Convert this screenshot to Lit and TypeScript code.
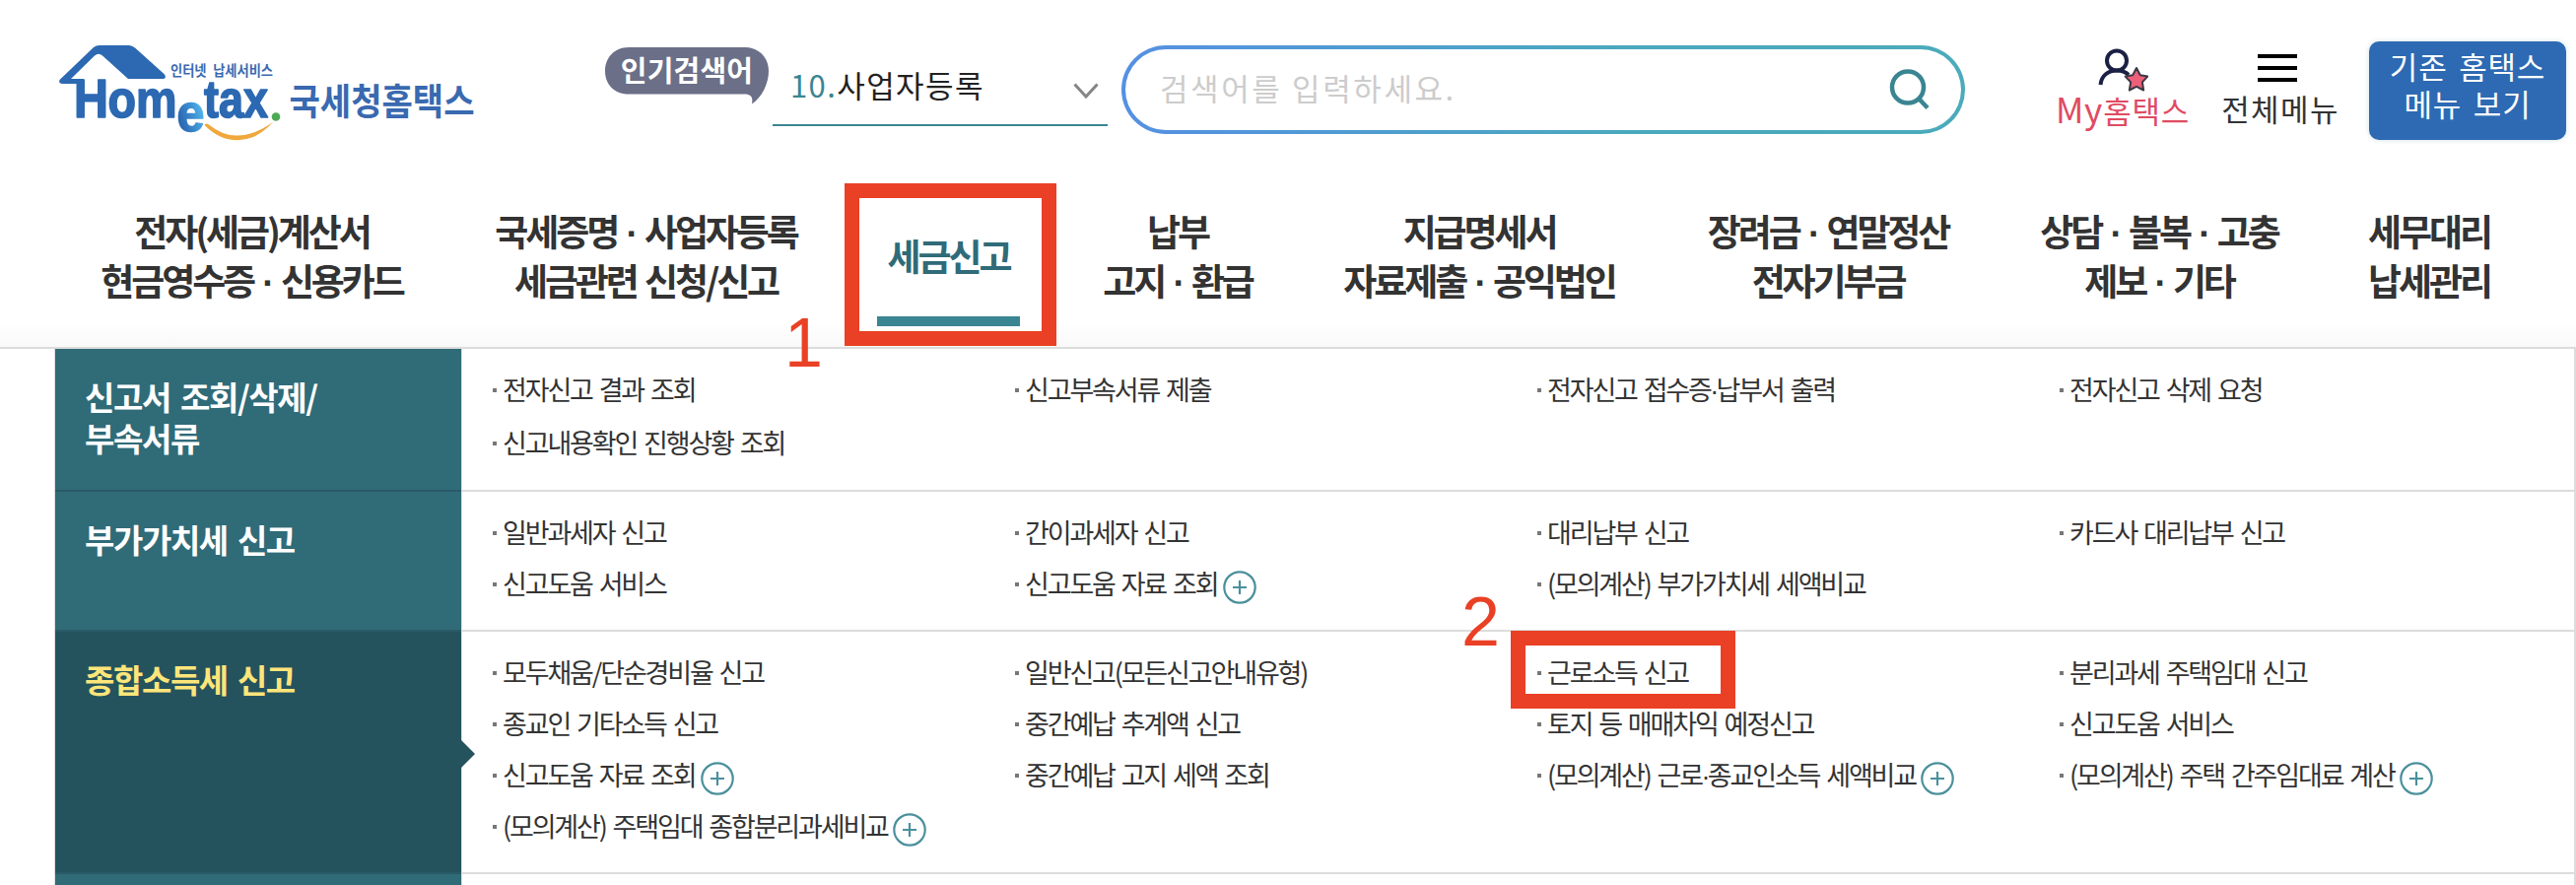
import { LitElement, html, css, svg, nothing } from "lit";
import { customElement, property } from "lit/decorators.js";
import { classMap } from "lit/directives/class-map.js";

interface MenuLink {
  label: string;
  plus?: boolean;
}
interface MenuRow {
  title: string[];
  size: string;
  active?: boolean;
  columns: MenuLink[][];
}

const NAV: string[][] = [
  ["전자(세금)계산서", "현금영수증 · 신용카드"],
  ["국세증명 · 사업자등록", "세금관련 신청/신고"],
  ["세금신고"],
  ["납부", "고지 · 환급"],
  ["지급명세서", "자료제출 · 공익법인"],
  ["장려금 · 연말정산", "전자기부금"],
  ["상담 · 불복 · 고충", "제보 · 기타"],
  ["세무대리", "납세관리"],
];

const ROWS: MenuRow[] = [
  {
    title: ["신고서 조회/삭제/", "부속서류"],
    size: "first",
    columns: [
      [{ label: "전자신고 결과 조회" }, { label: "신고내용확인 진행상황 조회" }],
      [{ label: "신고부속서류 제출" }],
      [{ label: "전자신고 접수증·납부서 출력" }],
      [{ label: "전자신고 삭제 요청" }],
    ],
  },
  {
    title: ["부가가치세 신고"],
    size: "second",
    columns: [
      [{ label: "일반과세자 신고" }, { label: "신고도움 서비스" }],
      [{ label: "간이과세자 신고" }, { label: "신고도움 자료 조회", plus: true }],
      [{ label: "대리납부 신고" }, { label: "(모의계산) 부가가치세 세액비교" }],
      [{ label: "카드사 대리납부 신고" }],
    ],
  },
  {
    title: ["종합소득세 신고"],
    size: "third",
    active: true,
    columns: [
      [
        { label: "모두채움/단순경비율 신고" },
        { label: "종교인 기타소득 신고" },
        { label: "신고도움 자료 조회", plus: true },
        { label: "(모의계산) 주택임대 종합분리과세비교", plus: true },
      ],
      [
        { label: "일반신고(모든신고안내유형)" },
        { label: "중간예납 추계액 신고" },
        { label: "중간예납 고지 세액 조회" },
      ],
      [
        { label: "근로소득 신고" },
        { label: "토지 등 매매차익 예정신고" },
        { label: "(모의계산) 근로·종교인소득 세액비교", plus: true },
      ],
      [
        { label: "분리과세 주택임대 신고" },
        { label: "신고도움 서비스" },
        { label: "(모의계산) 주택 간주임대료 계산", plus: true },
      ],
    ],
  },
  { title: [], size: "fourth", columns: [[], [], [], []] },
];

/* Sets every middle dot of a label in a narrower face. */
const withDots = (text: string) =>
  text.split("·").map((part, i) => (i ? html`<span class="middot">·</span>${part}` : part));

@customElement("site-logo")
export class SiteLogo extends LitElement {
  static styles = css`
    :host {
      display: block;
      width: 450px;
      height: 110px;
    }
    .mark {
      display: block;
    }
    .latin {
      font-family: "Liberation Sans", Arial, sans-serif;
      font-weight: 700;
    }
    .korean {
      font-family: "Noto Sans CJK KR", sans-serif;
      font-weight: 700;
    }
    .slogan {
      word-spacing: 4px;
    }
  `;
  render() {
    return html`<svg class="mark" width="450" height="110" viewBox="56 40 450 110">
      ${svg`
      <defs>
        <linearGradient id="e" x1="0.9" y1="0.3" x2="0.2" y2="0.75">
          <stop offset="0" stop-color="#55bdf0"></stop>
          <stop offset="0.45" stop-color="#3e93d4"></stop>
          <stop offset="1" stop-color="#2c69b2"></stop>
        </linearGradient>
      </defs>
      <path fill="#2c69b2" d="M60.500 81 L95 48 Q97.500 46 101 46 H131 Q134 46 137 48.500 L167 75.500 Q169.500 80 165 80 H130 L104 56.500 Q100 53 96 56.500 L72 80 H85 V85 H63 Q59 84.500 60.500 81Z"></path>
      <g class="latin" fill="#2c69b2" stroke="#2c69b2" stroke-width="1.600" stroke-linejoin="round">
        <text x="75" y="119" font-size="55" textLength="35" lengthAdjust="spacingAndGlyphs">H</text>
        <text x="109.500" y="119" font-size="53" textLength="70" lengthAdjust="spacingAndGlyphs">om</text>
        <text x="179.500" y="132.500" font-size="53" fill="url(#e)" stroke="url(#e)" textLength="28" lengthAdjust="spacingAndGlyphs">e</text>
        <text x="207" y="119" font-size="53" textLength="65" lengthAdjust="spacingAndGlyphs">tax</text>
      </g>
      <circle cx="280" cy="118.500" r="4.300" fill="#4cab55"></circle>
      <path fill="#f0a83c" d="M207.500 127 Q209 124.500 212 126.500 Q226 138 241 137.500 Q258 137.500 277.500 123.500 Q260 142.500 241 142.300 Q223 142.500 207.500 127Z"></path>
      <g class="korean" fill="#3a69b0">
        <text class="slogan" x="173" y="76.500" font-size="14.500" textLength="104" lengthAdjust="spacingAndGlyphs">인터넷 납세서비스</text>
        <text x="293.500" y="116.500" font-size="37" textLength="188" lengthAdjust="spacingAndGlyphs">국세청홈택스</text>
      </g>`}
    </svg>`;
  }
}

@customElement("menu-link")
export class MenuLinkItem extends LitElement {
  @property() label = "";
  @property({ type: Boolean }) plus = false;
  static styles = css`
    :host {
      display: flex;
      align-items: center;
      height: var(--line, 52px);
      white-space: nowrap;
      color: #333;
      font-size: 27px;
      letter-spacing: -2.15px;
      word-spacing: 3px;
    }
    .dot {
      width: 4px;
      height: 4px;
      margin-right: 6px;
      background: #777;
    }
    .label {
      padding-bottom: 4px;
    }
    .middot {
      font-family: "Liberation Sans", sans-serif;
      line-height: 0;
      margin: 0 -0.5px;
    }
    .plus {
      margin: 6px 0 0 5.5px;
      flex: none;
    }
  `;
  render() {
    return html`<span class="dot"></span><span class="label">${withDots(this.label)}</span>${this.plus
        ? html`<svg class="plus" width="34" height="34" viewBox="0 0 34 34" fill="none" stroke="#4a909c" stroke-width="2.200">
            <circle cx="17" cy="17" r="15.700"></circle>
            <path d="M10 17H24M17 10V24"></path>
          </svg>`
        : nothing}`;
  }
}

@customElement("app-root")
export class AppRoot extends LitElement {
  static styles = css`
    :host {
      display: block;
      position: relative;
      width: 2614px;
      height: 898px;
      overflow: hidden;
      background: #fff;
      font-family: "Noto Sans CJK KR", sans-serif;
      color: #333;
    }
    * {
      box-sizing: border-box;
    }
    .header {
      display: flex;
      align-items: flex-start;
      height: 186px;
      padding: 40px 0 0 56px;
      white-space: nowrap;
    }
    .badge {
      margin: 7px 0 0 108px;
      display: grid;
      width: 166px;
      height: 60px;
    }
    .badge > * {
      grid-area: 1 / 1;
    }
    .badge-text {
      height: 48px;
      line-height: 46px;
      text-align: center;
      color: #fff;
      font-weight: 700;
      font-size: 29px;
      letter-spacing: 0.2px;
    }
    .select {
      display: flex;
      justify-content: space-between;
      align-items: center;
      width: 340px;
      height: 78px;
      margin: 10px 0 0 4px;
      padding: 0 9px 5px 18px;
      border-bottom: 2px solid #3a8592;
      font-size: 31px;
      color: #222;
      letter-spacing: 1.4px;
    }
    .chevron {
      margin-top: 12px;
    }
    .rank {
      color: #3a8592;
    }
    .search {
      display: flex;
      justify-content: space-between;
      align-items: center;
      width: 856px;
      height: 90px;
      margin: 6px 0 0 14px;
      padding: 0 31px 0 35px;
      border: 4px solid transparent;
      border-radius: 45px;
      background: linear-gradient(#fff, #fff) padding-box,
        linear-gradient(90deg, #5590e3, #4aa9bd 60%, #4aabbb) border-box;
    }
    .placeholder {
      padding-bottom: 5px;
      color: #ccc;
      font-size: 31px;
      letter-spacing: 2.6px;
    }
    .shortcut {
      display: flex;
      flex-direction: column;
      align-items: center;
      font-size: 31px;
      line-height: 32px;
    }
    .mine {
      width: 140px;
      margin: 8px 0 0 90px;
      color: #df4b62;
      letter-spacing: 0.8px;
    }
    .my {
      font-size: 35px;
    }
    .all {
      width: 120px;
      margin: 8px 0 0 30px;
      letter-spacing: 1.4px;
    }
    .burger {
      margin-right: 7px;
    }
    .legacy {
      width: 200px;
      height: 100px;
      margin: 2px 0 0 30px;
      padding-top: 6px;
      border-radius: 10px;
      background: #2d6ab3;
      box-shadow: 0 0 5px rgba(60, 130, 150, 0.25);
      color: #fff;
      text-align: center;
      font-size: 31px;
      line-height: 37.5px;
      letter-spacing: 0.8px;
      word-spacing: 4px;
    }
    .nav {
      display: grid;
      grid-template-columns: 391px 409px 205px 260px 352px 356px 316px 232px;
      height: 168px;
      padding: 0 33px 0 60px;
      border-bottom: 2px solid #dcdcdc;
      background: linear-gradient(#fff 85%, #f9f9f9);
    }
    .nav-item {
      display: flex;
      flex-direction: column;
      justify-content: center;
      align-items: center;
      height: 145px;
      font-size: 37px;
      font-weight: 700;
      line-height: 50px;
      letter-spacing: -3.1px;
      word-spacing: 3px;
      white-space: nowrap;
    }
    .line {
      height: 50px;
    }
    .middot {
      font-family: "Liberation Sans", sans-serif;
      line-height: 0;
      margin: 0 1px;
    }
    .nav-item.current {
      color: #2f6b78;
      padding-top: 48px;
      justify-content: flex-start;
    }
    .nav-item.current::after {
      content: "";
      width: 145px;
      height: 10px;
      margin-top: 37px;
      flex: none;
      background: #3a8592;
    }
    .mega {
      margin-left: 55px;
      border-left: 1px solid #dcdcdc;
      border-right: 2px solid #dcdcdc;
    }
    .row {
      display: grid;
      grid-template-columns: 412px 1fr;
    }
    .first {
      height: 145px;
      --line: 54px;
      --top: 15px;
    }
    .second {
      height: 142px;
    }
    .third {
      height: 246px;
    }
    .fourth {
      height: 12px;
    }
    .title {
      display: flex;
      flex-direction: column;
      position: relative;
      padding: 27px 0 0 30px;
      background: #306b78;
      border-bottom: 2px solid #295a66;
      color: #fff;
      font-size: 33px;
      font-weight: 700;
      line-height: 42px;
      letter-spacing: -1.4px;
      word-spacing: 4px;
    }
    .title.active {
      background: #24535e;
      color: #fde57a;
    }
    .title.active::after {
      content: "";
      position: absolute;
      left: 412px;
      top: 110px;
      border: 14px solid transparent;
      border-left-color: #24535e;
      border-right-width: 0;
    }
    .cells {
      display: grid;
      grid-template-columns: repeat(4, 530px);
      padding: var(--top, 16px) 0 0 31px;
      border-left: 1px solid #dcdcdc;
      border-bottom: 2px solid #dcdcdc;
      overflow: hidden;
    }
    .mark {
      position: absolute;
      border: 15px solid #ea4025;
    }
    .mark-nav {
      left: 857px;
      top: 186px;
      width: 215px;
      height: 165px;
    }
    .mark-link {
      left: 1533px;
      top: 640px;
      width: 228px;
      height: 79px;
    }
    .step {
      position: absolute;
      color: #ea4025;
      font: 70px/70px "Liberation Sans", Arial, sans-serif;
    }
    .step-one {
      left: 796px;
      top: 313px;
    }
    .step-two {
      left: 1483px;
      top: 596px;
    }
  `;

  render() {
    return html`
      <header class="header">
        <site-logo></site-logo>
        <div class="badge">
          <svg width="166" height="60" viewBox="0 0 166 60">
            <path fill="#6b6f87" d="M24 1H142C157 1 166 12 166 25C166 38 159 52 149 58.500C150 52 149 48.500 141 48.500H24C9 48.500 0 38 0 25C0 12 9 1 24 1Z"></path>
          </svg>
          <span class="badge-text">인기검색어</span>
        </div>
        <div class="select">
          <span><span class="rank">10.</span>사업자등록</span>
          <svg class="chevron" width="26" height="18" viewBox="0 0 26 18" fill="none" stroke="#858585" stroke-width="3">
            <path d="M1.500 2.500L13 15L24.500 2.500"></path>
          </svg>
        </div>
        <div class="search">
          <span class="placeholder">검색어를 입력하세요.</span>
          <svg width="42" height="42" viewBox="0 0 42 42" fill="none" stroke="#3a8592" stroke-width="4.500">
            <circle cx="19" cy="18.500" r="16"></circle>
            <path d="M30 30L39 39.500"></path>
          </svg>
        </div>
        <div class="shortcut mine">
          <svg width="52" height="46" viewBox="0 0 52 46">
            <g fill="none" stroke="#1b2144" stroke-width="4">
              <circle cx="20" cy="13.500" r="10"></circle>
              <path d="M3.500 38C4.500 28 12 23.500 20 23.500C25 23.500 29 25 32 28"></path>
            </g>
            <path fill="#ec6079" stroke="#3c3844" stroke-width="2" stroke-linejoin="round" d="M40 21L43.800 28.300L51.300 29.600L45.900 35.400L47.200 43.500L40 39.800L32.800 43.500L34.100 35.400L28.700 29.600L36.200 28.300Z"></path>
          </svg>
          <span><span class="my">My</span>홈택스</span>
        </div>
        <div class="shortcut all">
          <svg class="burger" width="40" height="46" viewBox="0 0 40 46" stroke="#000" stroke-width="4">
            <path d="M0 9H40M0 21H40M0 33H40"></path>
          </svg>
          <span>전체메뉴</span>
        </div>
        <div class="legacy">기존 홈택스<br />메뉴 보기</div>
      </header>
      <nav class="nav">
        ${NAV.map(
          (lines, i) => html`<div class=${classMap({ "nav-item": true, current: i === 2 })}>
            ${lines.map((l) => html`<span class="line">${withDots(l)}</span>`)}
          </div>`
        )}
      </nav>
      <main class="mega">
        ${ROWS.map(
          (row) => html`<section class="row ${row.size}">
            <div class=${classMap({ title: true, active: !!row.active })}>
              ${row.title.map((t) => html`<span>${t}</span>`)}
            </div>
            <div class="cells">
              ${row.columns.map(
                (col) => html`<div>
                  ${col.map((l) => html`<menu-link .label=${l.label} .plus=${!!l.plus}></menu-link>`)}
                </div>`
              )}
            </div>
          </section>`
        )}
      </main>
      <div class="mark mark-nav"></div>
      <div class="mark mark-link"></div>
      <span class="step step-one">1</span>
      <span class="step step-two">2</span>
    `;
  }
}
